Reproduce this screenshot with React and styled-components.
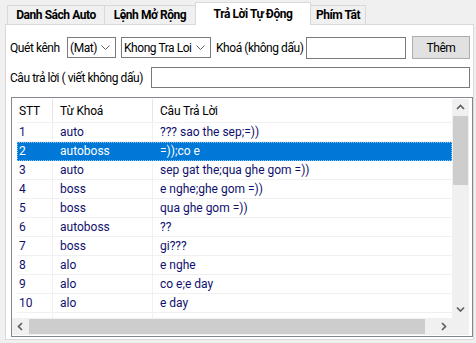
import React from 'react';
import styled, { createGlobalStyle } from 'styled-components';

const Global = createGlobalStyle`
  html, body { margin: 0; padding: 0; background: #f0f0f0; }
  body {
    font-family: Roboto, "Noto Sans", sans-serif;
    font-size: 12px;
    color: #000;
  }
  * { box-sizing: border-box; }
`;

const Window = styled.div`
  width: 476px;
  height: 343px;
  background: #f0f0f0;
  overflow: hidden;
`;

const TabStrip = styled.div`
  display: flex;
  align-items: flex-end;
  height: 25px;
  padding-left: 7px;
  margin-bottom: -1px;
`;

const Tab = styled.div`
  position: relative;
  z-index: ${p => (p.$active ? 2 : 1)};
  width: ${p => p.$w}px;
  height: ${p => (p.$active ? 23 : 20)}px;
  margin-left: ${p => (p.$first ? 0 : -1)}px;
  border: 1px solid #d9d9d9;
  border-bottom: ${p => (p.$active ? 'none' : '1px solid #d9d9d9')};
  background: ${p => (p.$active ? '#fff' : '#f0f0f0')};
  font-weight: 700;
  font-size: 12px;
  letter-spacing: -0.45px;
  display: flex;
  justify-content: center;
  align-items: ${p => (p.$active ? 'flex-start' : 'center')};
  padding-top: ${p => (p.$active ? 3 : 0)}px;
  line-height: 16px;
  white-space: nowrap;
`;

const Panel = styled.div`
  position: relative;
  z-index: 1;
  margin-left: 5px;
  width: 469px;
  height: 316px;
  border: 1px solid #d9d9d9;
  background: #fff;
  padding: 11px 0 0 4px;
`;

const FormRow = styled.div`
  display: flex;
  align-items: center;
  height: ${p => p.$h}px;
  margin-top: ${p => p.$mt || 0}px;
  letter-spacing: -0.45px;
`;

const Label = styled.div`
  width: ${p => p.$w}px;
  margin-left: ${p => p.$ml || 0}px;
  white-space: nowrap;
  line-height: 16px;
`;

const Combo = styled.div`
  width: ${p => p.$w}px;
  height: 21px;
  margin-right: ${p => p.$mr || 0}px;
  border: 1px solid #7a7a7a;
  background: #fff;
  display: flex;
  align-items: center;
  justify-content: space-between;
  padding: 0 5px 0 2px;
  white-space: nowrap;
`;

const TextBox = styled.div`
  width: ${p => p.$w}px;
  height: ${p => p.$h}px;
  border: 1px solid #7a7a7a;
  background: #fff;
`;

const Button = styled.div`
  width: 58px;
  height: 23px;
  margin-left: 6px;
  border: 1px solid #adadad;
  background: #e1e1e1;
  display: flex;
  align-items: center;
  justify-content: center;
`;

const ListBox = styled.div`
  margin-top: 9px;
  margin-left: 1px;
  width: 462px;
  height: 240px;
  border: 1px solid #828790;
  padding: 1px 3px 1px 0;
  background: #fff;
  display: grid;
  grid-template-columns: 440px 17px;
  grid-template-rows: 219px 17px;
`;

const ListArea = styled.div`
  overflow: hidden;
  padding-left: 5px;
  background: #fff;
`;

const HeaderRow = styled.div`
  display: grid;
  grid-template-columns: 36px 100px 1fr;
  height: 24px;
  border-bottom: 1px solid #f0f0f0;
  letter-spacing: -0.2px;
`;

const HeaderCell = styled.div`
  padding-left: ${p => (p.$first ? 2 : 7)}px;
  border-right: ${p => (p.$last ? 'none' : '1px solid #e5e5e5')};
  display: flex;
  align-items: center;
  white-space: nowrap;
`;

const Row = styled.div`
  display: grid;
  grid-template-columns: 36px 100px 1fr;
  height: 19px;
  border-bottom: 1px solid ${p => (p.$selected ? '#0078d7' : '#f0f0f0')};
  background: ${p => (p.$selected ? '#0078d7' : '#fff')};
  color: ${p => (p.$selected ? '#fff' : '#10106e')};
  outline: ${p => (p.$selected ? '1px dotted #8cc4f0' : 'none')};
  outline-offset: -1px;
`;

const Cell = styled.div`
  padding-left: ${p => (p.$first ? 2 : 7)}px;
  border-right: ${p => (p.$last ? 'none' : `1px solid ${p.$selected ? '#0078d7' : '#f0f0f0'}`)};
  display: flex;
  align-items: center;
  white-space: nowrap;
  overflow: hidden;
  line-height: 16px;
  font-size: 12px;
`;

const VScroll = styled.div`
  background: #f0f0f0;
  display: flex;
  flex-direction: column;
`;

const HScroll = styled.div`
  background: #f0f0f0;
  display: flex;
  align-items: stretch;
`;

const ArrowBtn = styled.div`
  width: 17px;
  height: 17px;
  flex: none;
  display: flex;
  align-items: center;
  justify-content: center;
`;

const Thumb = styled.div`
  background: #cdcdcd;
  ${p =>
    p.$vertical
      ? `height: ${p.$len}px; margin: 0 1px;`
      : `width: ${p.$len}px; margin: 1px 0;`}
`;

const Track = styled.div`
  flex: 1;
`;

const Corner = styled.div`
  background: #f0f0f0;
`;

const Chevron = ({ dir }) => {
  const pts = {
    up: '1,5 4.5,1.5 8,5',
    down: '1,1.5 4.5,5 8,1.5',
    left: '5,1 1.5,4.5 5,8',
    right: '2,1 5.5,4.5 2,8',
  }[dir];
  const vert = dir === 'up' || dir === 'down';
  return (
    <svg width={vert ? 9 : 7} height={vert ? 7 : 9} viewBox={vert ? '0 0 9 7' : '0 0 7 9'}>
      <polyline points={pts} fill="none" stroke="#606060" strokeWidth="1.7" />
    </svg>
  );
};

const ComboArrow = () => (
  <svg width="9" height="5" viewBox="0 0 9 5">
    <polyline points="0.5,0.5 4.5,4.5 8.5,0.5" fill="none" stroke="#606060" strokeWidth="1" />
  </svg>
);

const tabs = [
  { label: 'Danh Sách Auto', w: 98 },
  { label: 'Lệnh Mở Rộng', w: 92 },
  { label: 'Trả Lời Tự Động', w: 116, active: true },
  { label: 'Phím Tắt', w: 56 },
];

const rows = [
  ['1', 'auto', '??? sao the sep;=))'],
  ['2', 'autoboss', '=));co e'],
  ['3', 'auto', 'sep gat the;qua ghe gom =))'],
  ['4', 'boss', 'e nghe;ghe gom =))'],
  ['5', 'boss', 'qua ghe gom =))'],
  ['6', 'autoboss', '??'],
  ['7', 'boss', 'gi???'],
  ['8', 'alo', 'e nghe'],
  ['9', 'alo', 'co e;e day'],
  ['10', 'alo', 'e day'],
  ['', '', ''],
];

export default function App() {
  return (
    <Window>
      <Global />
      <TabStrip>
        {tabs.map((t, i) => (
          <Tab key={t.label} $w={t.w} $active={t.active} $first={i === 0}>
            {t.label}
          </Tab>
        ))}
      </TabStrip>
      <Panel>
        <FormRow $h={23}>
          <Label $w={57}>Quét kênh</Label>
          <Combo $w={49} $mr={5}>
            <span>(Mat)</span>
            <ComboArrow />
          </Combo>
          <Combo $w={90}>
            <span>Khong Tra Loi</span>
            <ComboArrow />
          </Combo>
          <Label $w={90} $ml={5}>Khoá (không dấu)</Label>
          <TextBox $w={100} $h={22} />
          <Button>Thêm</Button>
        </FormRow>
        <FormRow $h={21} $mt={8}>
          <Label $w={141}>Câu trả lời ( viết không dấu)</Label>
          <TextBox $w={319} $h={21} />
        </FormRow>
        <ListBox>
          <ListArea>
            <HeaderRow>
              <HeaderCell $first>STT</HeaderCell>
              <HeaderCell>Từ Khoá</HeaderCell>
              <HeaderCell $last>Câu Trả Lời</HeaderCell>
            </HeaderRow>
            {rows.map((r, i) => {
              const sel = i === 1;
              return (
                <Row key={i} $selected={sel}>
                  <Cell $first $selected={sel}>{r[0]}</Cell>
                  <Cell $selected={sel}>{r[1]}</Cell>
                  <Cell $last $selected={sel}>{r[2]}</Cell>
                </Row>
              );
            })}
          </ListArea>
          <VScroll>
            <ArrowBtn><Chevron dir="up" /></ArrowBtn>
            <Thumb $vertical $len={69} />
            <Track />
            <ArrowBtn><Chevron dir="down" /></ArrowBtn>
          </VScroll>
          <HScroll>
            <ArrowBtn><Chevron dir="left" /></ArrowBtn>
            <Thumb $len={396} />
            <Track />
            <ArrowBtn><Chevron dir="right" /></ArrowBtn>
          </HScroll>
          <Corner />
        </ListBox>
      </Panel>
    </Window>
  );
}
